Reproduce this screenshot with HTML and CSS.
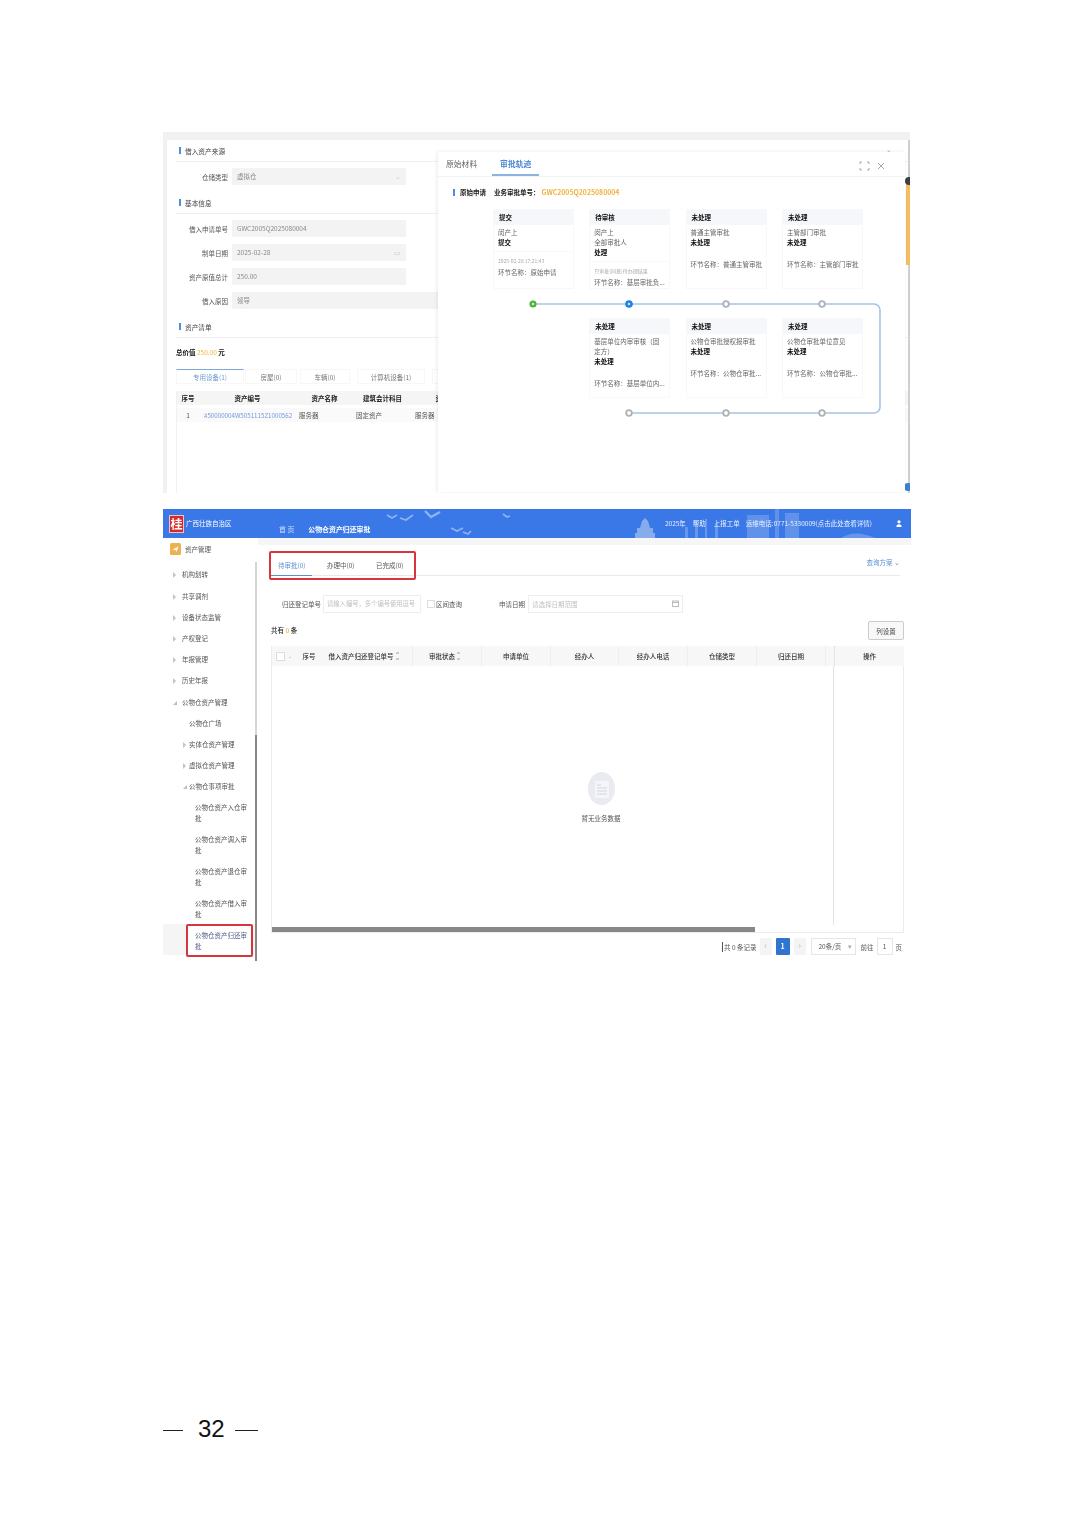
FILE: index.html
```html
<!DOCTYPE html>
<html lang="zh-CN">
<head>
<meta charset="utf-8">
<title>公物仓资产归还审批</title>
<link rel="stylesheet" href="styles.css">
</head>
<body>
<main class="page">
  <section class="fig1">
    <div class="panel">
      <div class="sec-title"><i class="tick"></i>借入资产来源</div>
      <div class="form-row"><label>仓储类型</label><div class="field">虚拟仓<span class="caret">⌄</span></div></div>
      <div class="sec-title sec-gap"><i class="tick"></i>基本信息</div>
      <div class="form-row"><label>借入申请单号</label><div class="field">GWC2005Q2025080004</div></div>
      <div class="form-row row-gap"><label>制单日期</label><div class="field">2025-02-28<span class="caret">▭</span></div></div>
      <div class="form-row row-gap"><label>资产原值总计</label><div class="field">250.00</div></div>
      <div class="form-row row-gap"><label>借入原因</label><div class="field wide">领导</div></div>
      <div class="sec-title sec-gap"><i class="tick"></i>资产清单</div>
      <div class="total">总价值 <em>250.00</em> 元</div>
      <div class="asset-tabs">
        <span class="asset-tab first">专用设备(1)</span><span class="asset-tab t2">房屋(0)</span><span class="asset-tab t3">车辆(0)</span><span class="asset-tab t4">计算机设备(1)</span><span class="asset-tab t5">其他</span>
      </div>
      <div class="asset-table">
        <div class="asset-row head"><span>序号</span><span>资产编号</span><span>资产名称</span><span>建筑会计科目</span><span>资产</span></div>
        <div class="asset-row body"><span>1</span><span class="link">#50000004W5051115Z1000562</span><span>服务器</span><span>固定资产</span><span>服务器</span></div>
      </div>
    </div>
    <div class="rail-strip"><b></b><u></u></div>
    <span class="blue-dot"></span>
    <div class="modal">
      <div class="modal-tabs">
        <span class="m-tab">原始材料</span><span class="m-tab on">审批轨迹</span>
        <svg class="m-icons" viewBox="0 0 34 10" width="34" height="10"><path d="M1 3V1h2M8 1h2v2M10 7v2H8M3 9H1V7" fill="none" stroke="#a8a8a8"/><path d="M19 2l6 6M25 2l-6 6" stroke="#a8a8a8"/></svg>
      </div>
      <div class="m-title"><i class="tick"></i><b>原始申请</b><b class="m-no">业务审批单号：</b><em>GWC2005Q2025080004</em></div>
      <div class="flow">
        <article class="card"><h4>提交</h4><p>闵产上</p><p class="st">提交</p><div class="foot"><small>2025-02-28 17:21:43</small><p>环节名称：原始申请</p></div></article>
        <article class="card"><h4>待审核</h4><p>闵产上</p><p>全部审批人</p><p class="st">处理</p><div class="foot"><small>只审批(同意)待办理结果</small><p>环节名称：基层审批负...</p></div></article>
        <article class="card"><h4>未处理</h4><p>普通主管审批</p><p class="st">未处理</p><div class="foot plain"><p>环节名称：普通主管审批</p></div></article>
        <article class="card"><h4>未处理</h4><p>主管部门审批</p><p class="st">未处理</p><div class="foot plain"><p>环节名称：主管部门审批</p></div></article>
        <article class="card c2"><h4>未处理</h4><p>基层单位内审审核（固定方）</p><p class="st">未处理</p><div class="foot plain"><p>环节名称：基层单位内...</p></div></article>
        <article class="card"><h4>未处理</h4><p>公物仓审批授权报审批</p><p class="st">未处理</p><div class="foot plain"><p>环节名称：公物仓审批...</p></div></article>
        <article class="card"><h4>未处理</h4><p>公物仓审批单位意见</p><p class="st">未处理</p><div class="foot plain"><p>环节名称：公物仓审批...</p></div></article>
      </div>
      <svg class="rail" viewBox="0 0 467 340" width="467" height="340">
        <path d="M95 152H436a6 6 0 0 1 6 6V255a6 6 0 0 1-6 6H191" fill="none" stroke="#a5c3e6" stroke-width="1.6"/>
        <circle cx="95" cy="152" r="3.6" fill="#4fb33f"/><circle cx="95" cy="152" r="1.2" fill="#d9f0d4"/>
        <circle cx="191" cy="152" r="3.8" fill="#1c83e6"/><circle cx="191" cy="152" r="1.2" fill="#d7ebff"/>
        <g fill="#fff" stroke="#b1b1b1" stroke-width="1.8">
          <circle cx="288" cy="152" r="2.8"/><circle cx="384" cy="152" r="2.8"/>
          <circle cx="191" cy="261" r="2.8"/><circle cx="288" cy="261" r="2.8"/><circle cx="384" cy="261" r="2.8"/>
        </g>
      </svg>
    </div>
    <span class="fold">⌄</span>
  </section>

  <section class="fig2">
    <header class="top">
      <svg class="deco" viewBox="0 0 748 29" width="748" height="29">
        <g fill="none" stroke="#8fb3f0" stroke-width="1.6">
          <path d="M224 6l5 3 5-3M237 9l6 2 7-5"/><path d="M262 2l6 6 9-5" stroke-width="2.4"/><path d="M288 19l6 3 6-3M300 23l5 2 3-3"/><path d="M340 5l4 3 3-1"/>
        </g>
        <g fill="#86acee">
          <path d="M472 29v-5h2v-5h3l2-7 3-3 3 3 2 7h3v5h2v5z"/>
          <path d="M522 29V18h3v11zM532 29V12h3v17zM542 29V10h2v19zM552 29V14h3v15z" opacity=".6"/>
          <path d="M584 29V6h22v23zM612 29V0h4v29zM622 29V4h14v25z" opacity=".5"/>
          <path d="M678 29q14-9 34 0z" opacity=".6"/>
        </g>
      </svg>
      <div class="logo">桂</div>
      <div class="region">广西壮族自治区</div>
      <nav class="crumbs"><span>首 页</span><b>公物仓资产归还审批</b></nav>
      <div class="tools">
        <span class="y">2025年</span><span class="h">帮助</span><span class="w">上报工单</span><span class="t">运维电话:0771-5330009(点击此处查看详情)</span>
        <svg class="user" viewBox="0 0 6 7" width="6" height="7"><circle cx="3" cy="1.8" r="1.6" fill="#fff"/><path d="M.5 7V5.4Q3 3 5.500 5.4V7z" fill="#fff"/></svg>
      </div>
    </header>
    <div class="work">
      <aside class="side">
        <div class="side-list">
          <div class="side-head"><svg viewBox="0 0 11 12" width="11" height="12"><rect width="11" height="12" rx="1.500" fill="#efb04f"/><path d="M2.500 6.500L8.500 3.500 6.500 9 5.500 7z" fill="#fff"/></svg>资产管理</div>
          <div class="item"><i></i>机构划转</div>
          <div class="item"><i></i>共享调剂</div>
          <div class="item"><i></i>设备状态监管</div>
          <div class="item"><i></i>产权登记</div>
          <div class="item"><i></i>年报管理</div>
          <div class="item"><i></i>历史年报</div>
          <div class="item"><i class="open"></i>公物仓资产管理</div>
          <div class="item l2 plain">公物仓广场</div>
          <div class="item l2"><i></i>实体仓资产管理</div>
          <div class="item l2"><i></i>虚拟仓资产管理</div>
          <div class="item l2"><i class="open"></i>公物仓事项审批</div>
          <div class="item l3"><span>公物仓资产入仓审批</span></div>
          <div class="item l3"><span>公物仓资产调入审批</span></div>
          <div class="item l3"><span>公物仓资产退仓审批</span></div>
          <div class="item l3"><span>公物仓资产借入审批</span></div>
          <div class="item l3 active"><span>公物仓资产归还审批</span></div>
        </div>
        <div class="side-bar"></div>
      </aside>
      <div class="content">
        <div class="tabs">
          <span class="tab on">待审批(0)</span><span class="tab">办理中(0)</span><span class="tab">已完成(0)</span>
          <span class="scheme">查询方案 ⌄</span>
        </div>
        <div class="filters">
          <span class="f-label">归还登记单号</span>
          <span class="f-input code">请输入编号，多个编号使用逗号</span>
          <span class="check"></span><span class="f-range">区间查询</span>
          <span class="f-label date">申请日期</span>
          <span class="f-input range">请选择日期范围
            <svg viewBox="0 0 7 7" width="7" height="7"><rect x=".5" y="1" width="6" height="5.500" fill="none" stroke="#bbb"/><path d="M.5 2.500h6" stroke="#bbb"/></svg>
          </span>
        </div>
        <div class="count"><span class="count-text">共有 <em>0</em> 条</span><button class="col-set">列设置</button></div>
        <div class="table">
          <div class="thead">
            <span class="tc-check"><i></i><u>⌄</u></span>
            <span class="no">序号</span>
            <span class="sep sort code-col">借入资产归还登记单号<s></s></span>
            <span class="sep sort state-col">审批状态<s></s></span>
            <span class="sep">申请单位</span>
            <span class="sep">经办人</span>
            <span class="sep">经办人电话</span>
            <span class="sep">仓储类型</span>
            <span class="sep">归还日期</span>
            <span></span>
            <span class="fixed">操作</span>
          </div>
          <div class="tbody">
            <div class="empty">
              <svg viewBox="0 0 27 33" width="27" height="33"><ellipse cx="13.500" cy="16.500" rx="13.500" ry="16.500" fill="#e9ebf1"/><rect x="7" y="9" width="14" height="17" fill="#f4f5f8"/><path d="M9 13h4M9 16h10M9 19h10M9 22h10" stroke="#d2d5dd"/></svg>
              <p>暂无业务数据</p>
            </div>
            <div class="fixed-col"></div>
          </div>
          <div class="hscroll"></div>
        </div>
        <div class="pager">
          <span class="p-total">共 0 条记录</span>
          <span class="p-btn">‹</span><span class="p-btn cur">1</span><span class="p-btn">›</span>
          <span class="p-size">20条/页<i>▾</i></span>
          <span>前往</span><span class="p-go">1</span><span>页</span>
        </div>
        <div class="mark"></div>
      </div>
    </div>
  </section>

  <footer class="pageno"><i></i><span>32</span><i></i></footer>
</main>
</body>
</html>
```
FILE: styles.css
```css
* { box-sizing: border-box; }
html, body { margin: 0; background: #fff; }
body { font-family: "Noto Sans CJK SC", "Liberation Sans", sans-serif; font-size: 6.5px; color: #555; }
em, i, u, s { font-style: normal; text-decoration: none; }
p, h4 { margin: 0; }

.page { width: 1074px; height: 1520px; padding: 132px 163px 0; display: flex; flex-direction: column; }

/* first screenshot */
.fig1 { position: relative; width: 747px; height: 361px; flex: none; padding: 8px 2px 0 4px; background: #f1f1f1; overflow: hidden; filter: blur(.6px); }
.panel { height: 100%; background: #fff; padding-left: 9px; overflow: hidden; }
.sec-title { height: 22px; display: flex; align-items: center; gap: 4px; padding-left: 3px; border-bottom: 1px solid #f0f0f0; color: #444; font-size: 6.700px; margin-bottom: 6px; }
.sec-gap { margin-top: 7px; }
.tick { width: 2px; height: 7px; background: #4a8fe0; flex: none; }
.form-row { height: 17px; display: flex; align-items: center; gap: 4px; }
.row-gap { margin-top: 7px; }
.form-row label { width: 52px; text-align: right; color: #555; }
.field { position: relative; width: 174px; height: 17px; line-height: 17px; padding-left: 5px; background: #f3f3f3; color: #888; border-radius: 1px; }
.field.wide { width: 400px; }
.caret { position: absolute; right: 5px; top: 0; color: #ccc; }
.total { margin-top: 7px; height: 14px; line-height: 14px; color: #111; font-weight: 700; }
.total em { color: #f0b43c; font-weight: 400; }
.asset-tabs { display: flex; height: 15px; margin-top: 10px; color: #777; }
.asset-tab { height: 15px; line-height: 15px; text-align: center; border: 1px solid #f7f7f7; flex: none; }
.first { width: 68px; color: #6e9ad0; border-top: 1px solid #7aa7dc; }
.t2 { width: 52px; margin-left: 1px; }
.t3 { width: 50px; margin-left: 3px; }
.t4 { width: 68px; margin-left: 7px; }
.t5 { width: 60px; margin-left: 7px; }
.asset-table { margin-top: 7px; height: 103px; border-left: 1px solid #f0f0f0; }
.asset-row { display: grid; grid-template-columns: 22px 97px 57px 59px 60px; align-items: center; }
.asset-row.head { height: 14px; background: #f5f5f5; color: #222; font-weight: 700; text-align: center; }
.asset-row.body { height: 14px; margin-top: 3px; background: #fafafa; color: #555; }
.asset-row.body span:first-child { text-align: center; }
.asset-row .link { color: #6d9bd8; font-size: 6.200px; padding-left: 5px; white-space: nowrap; overflow: hidden; }
.asset-row.body span:nth-child(n+3) { padding-left: 3px; }
.fold { position: absolute; left: 723px; top: 12px; color: #aaa; }
.rail-strip { position: absolute; right: 0; top: 8px; width: 2px; height: 353px; background: #cfcfcf; }
.rail-strip b { position: absolute; right: 0; top: 40px; width: 4px; height: 85px; background: #f3bd60; }
.rail-strip u { position: absolute; right: -3px; top: 37px; width: 8px; height: 8px; border-radius: 50%; background: #3c3f46; }
.blue-dot { position: absolute; right: -2px; top: 351px; width: 8px; height: 8px; border-radius: 50%; background: #3d80cf; }
.modal { position: absolute; left: 275px; top: 20px; width: 467px; height: 340px; background: #fff; box-shadow: -1px 0 4px rgba(0,0,0,.08); }
.modal-tabs { position: relative; height: 25px; display: flex; gap: 23px; padding-left: 8px; border-bottom: 1px solid #f2f2f2; align-items: flex-end; }
.m-tab { color: #666; line-height: 24px; height: 24px; font-size: 7.800px; }
.m-tab.on { color: #4d88cf; font-weight: 700; width: 47px; margin-left: -8px; text-align: center; border-bottom: 2px solid #8cb3e2; }
.m-icons { position: absolute; left: 421px; top: 9px; }
.m-title { height: 30px; display: flex; align-items: center; padding-left: 15px; color: #222; }
.m-title .tick { margin-right: 5px; }
.m-no { margin-left: 8px; }
.m-title em { color: #f0b43c; font-weight: 700; font-size: 6.900px; margin-left: 2px; }
.flow { display: grid; grid-template-columns: repeat(4, 81px); column-gap: 15.300px; row-gap: 29px; margin-top: 2px; padding-left: 55px; }
.card { height: 80px; border: 1px solid #f8f8f8; color: #666; line-height: 10px; overflow: hidden; }
.card h4 { height: 15px; line-height: 14px; padding-left: 5px; background: #f5f7fb; color: #111; font-size: 6.500px; margin-bottom: 2px; }
.card p { padding: 0 4px; }
.card .st { color: #111; font-weight: 700; }
.c2 { grid-column-start: 2; }
.foot { margin-top: 4px; padding-top: 4px; border-top: 1px solid #f8f8f8; }
.foot.plain { padding-top: 8px; border-top: 0; }
.foot p { white-space: nowrap; }
.foot small { display: block; height: 11px; padding-left: 4px; font-size: 5px; color: #aaa; white-space: nowrap; }
.rail { position: absolute; left: 0; top: 0; }

/* second screenshot */
.fig2 { width: 748px; height: 452px; flex: none; margin-top: 16px; display: flex; flex-direction: column; overflow: hidden; filter: blur(.2px); }
.top { position: relative; height: 29px; flex: none; background: #3b78e7; color: #fff; display: flex; align-items: center; padding: 0 9px 0 6px; overflow: hidden; }
.deco { position: absolute; left: 0; top: 0; }
.logo { position: relative; width: 15px; height: 18px; background: #d52b2b; border: 1px solid #f3c0c0; color: #fff; font-weight: 700; font-size: 12px; line-height: 15px; text-align: center; }
.region { position: relative; width: 45px; margin: -1px 0 0 2px; white-space: nowrap; }
.crumbs { position: relative; display: flex; gap: 14px; margin: 11px 0 0 48px; font-size: 6.900px; white-space: nowrap; }
.crumbs span { color: #cfe0fb; }
.tools { position: relative; margin: -1px 0 0 auto; display: flex; align-items: center; white-space: nowrap; color: #eaf1ff; }
.tools .h { margin-left: 7px; }
.tools .w { margin-left: 8px; }
.tools .t { margin-left: 6px; }
.user { margin-left: 24px; }
.work { flex: 1; display: flex; min-height: 0; background: #fff; }
.side { width: 95px; flex: none; display: flex; }
.side-list { width: 92px; flex: none; color: #555; }
.side-head { height: 26.400px; display: flex; align-items: center; gap: 4px; padding: 0 0 4px 7px; }
.item { position: relative; height: 21.200px; line-height: 21.200px; padding-left: 19px; white-space: nowrap; }
.item i { position: absolute; left: 10px; top: 8px; width: 0; height: 0; border-left: 3px solid #c4c4c4; border-top: 3px solid transparent; border-bottom: 3px solid transparent; }
.item i.open { left: 10px; top: 9px; border: 0; border-right: 4px solid #bdbdbd; border-top: 4px solid transparent; }
.item.l2 { padding-left: 26px; }
.item.l2 i { left: 20px; }
.item.l3 { height: 31.800px; padding-left: 0; }
.item.l3 span { display: block; margin-left: 23px; width: 67px; height: 33px; padding: 5px 5px 0 9px; line-height: 11px; white-space: normal; }
.item.active { background: #f5f5f5; }
.item.active span { background: #fff; border: 2px solid #d8343c; border-radius: 2px; padding: 4px 3px 0 7px; margin-top: -1px; color: #4f5f82; }
.side-bar { width: 2px; height: 100%; background: linear-gradient(#fff 0 24px, #d5d5d5 24px 197px, #888 197px); }
.content { position: relative; flex: 1; min-width: 0; padding: 0 7px 0 13px; background: linear-gradient(#f5f6f5 0 7px, #fff 7px); }
.tabs { height: 25px; margin-top: 13px; display: flex; border-bottom: 1px solid #e9e9e9; margin-right: 4px; position: relative; }
.tab { height: 25px; line-height: 29px; padding: 0 7px; color: #555; width: 41px; text-align: center; white-space: nowrap; margin-right: 8px; }
.tab.on { color: #5c8fd0; border-bottom: 1px solid #5c8fd0; }
.scheme { margin-left: auto; color: #5c8fd0; line-height: 23px; }
.mark { position: absolute; left: 11px; top: 13px; width: 147px; height: 29px; border: 2px solid #d8343c; border-radius: 2px; }
.filters { height: 18px; margin-top: 19px; display: flex; align-items: center; }
.f-label { width: 52px; padding-left: 11px; white-space: nowrap; color: #555; flex: none; }
.f-input { height: 18px; line-height: 16px; border: 1px solid #eee; color: #c0c0c0; padding-left: 3px; white-space: nowrap; overflow: hidden; flex: none; position: relative; }
.code { width: 98px; font-size: 6.300px; }
.check { width: 8px; height: 8px; margin-left: 6px; border: 1px solid #ddd; flex: none; }
.f-range { margin-left: 1px; width: 63px; color: #555; flex: none; }
.f-label.date { width: 29px; padding-left: 0; }
.range { width: 155px; }
.range svg { position: absolute; right: 3px; top: 4px; }
.count { height: 19px; margin-top: 8px; display: flex; align-items: center; justify-content: space-between; color: #222; font-weight: 500; }
.count-text { margin-top: -2px; }
.count em { color: #f0b43c; }
.col-set { width: 36px; height: 19px; padding: 0; background: #f8f8f8; border: 1px solid #ccc; border-radius: 2px; font: inherit; font-weight: 400; color: #444; }
.table { height: 287px; margin-top: 6px; border: 1px solid #ececec; border-top: 0; display: flex; flex-direction: column; }
.thead { height: 20px; flex: none; background: #f7f7f7; display: grid; grid-template-columns: 27px 24px 90px 69px 69px 68px 69px 69px 69px 8px 70px; align-items: center; text-align: center; color: #333; font-weight: 500; margin-right: -1px; }
.thead > span { height: 20px; line-height: 20px; white-space: nowrap; position: relative; }
.thead .no { padding-right: 4px; }
.thead .sep { border-right: 1px solid #eee; }
.thead .tc-check { text-align: left; padding-left: 4px; display: flex; align-items: center; gap: 3px; }
.tc-check i { width: 9px; height: 9px; border: 1px solid #ddd; background: #fff; }
.tc-check u { color: #aaa; font-size: 5px; }
.thead .code-col { padding-right: 13px; }
.thead .state-col { padding-right: 10px; }
.thead .sort s { position: absolute; right: 13px; top: 6px; width: 3px; height: 8px; border-top: 2px solid #ccc; border-bottom: 2px solid #ccc; }
.thead .state-col s { right: 21px; }
.thead .fixed { border-left: 1px solid #e3e3e3; }
.tbody { flex: 1; display: flex; min-height: 0; }
.empty { flex: 1; padding: 106px 0 0 97px; text-align: center; color: #555; }
.empty svg { display: block; margin: 0 auto 8px; }
.fixed-col { width: 70px; flex: none; border-left: 1px solid #e3e3e3; }
.hscroll { width: 483px; height: 5px; flex: none; background: #888; margin-top: 2px; }
.pager { height: 17px; margin-top: 5px; padding-right: 2px; display: flex; align-items: center; justify-content: flex-end; color: #555; white-space: nowrap; }
.p-total { margin-right: 3px; border-left: 1px solid #555; padding-left: 1px; }
.p-btn { width: 12px; height: 17px; line-height: 16px; text-align: center; background: #f4f4f4; color: #bbb; font-size: 9px; margin-right: 4px; border-radius: 1px; }
.p-btn.cur { width: 14px; background: #2f75d0; color: #fff; font-size: 7px; font-weight: 700; }
.p-size { position: relative; width: 45px; height: 17px; line-height: 15px; margin: 0 5px 0 1px; padding-left: 7px; border: 1px solid #e6e6e6; }
.p-size i { position: absolute; right: 3px; top: 0; color: #aaa; }
.p-go { width: 16px; height: 17px; line-height: 15px; margin: 0 3px; text-align: center; border: 1px solid #e6e6e6; }

/* page number */
.pageno { margin-top: 455px; height: 26px; display: flex; align-items: center; font-family: "Liberation Sans", Arial, sans-serif; font-size: 24px; color: #111; }
.pageno span { margin: 0 10px 0 15px; line-height: 26px; }
.pageno i { width: 20px; height: 1.500px; background: #222; margin-top: 3px; }
.pageno i:last-child { width: 23px; }
```
